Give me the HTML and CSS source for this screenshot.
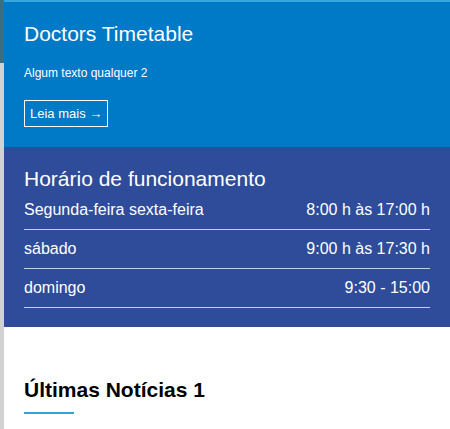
FILE: index.html
```html
<!DOCTYPE html>
<html lang="pt">
<head>
<meta charset="utf-8">
<title>Doctors Timetable</title>
<link rel="stylesheet" href="styles.css">
</head>
<body>
<div class="page">
  <div class="edge"><div class="edge-top"></div></div>
  <main class="main">
    <section class="hero">
      <h1 class="hero-title">Doctors Timetable</h1>
      <p class="hero-text">Algum texto qualquer 2</p>
      <a class="btn" href="#">Leia mais →</a>
    </section>
    <section class="hours">
      <h2 class="hours-title">Horário de funcionamento</h2>
      <div class="row"><span>Segunda-feira sexta-feira</span><span>8:00 h às 17:00 h</span></div>
      <div class="row"><span>sábado</span><span>9:00 h às 17:30 h</span></div>
      <div class="row"><span>domingo</span><span>9:30 - 15:00</span></div>
    </section>
    <section class="news">
      <h2 class="news-title">Últimas Notícias 1</h2>
      <div class="news-bar"></div>
    </section>
  </main>
</div>
</body>
</html>
```
FILE: styles.css
```css
html, body {
  margin: 0;
  padding: 0;
}
body {
  font-family: "Liberation Sans", Arial, sans-serif;
  background: #ffffff;
}
.page {
  display: flex;
  min-height: 429px;
}
.edge {
  width: 4px;
  flex: 0 0 4px;
  background: #d2d2d2;
}
.edge-top {
  height: 63px;
  background: #3b6f7f;
}
.main {
  flex: 1;
  display: flex;
  flex-direction: column;
}
.hero {
  background: #0079c6;
  border-top: 2px solid #36a6e0;
  padding: 20px 20px 20px;
  color: #ffffff;
}
.hero-title {
  margin: 0;
  font-size: 21px;
  line-height: 24px;
  font-weight: normal;
}
.hero-text {
  margin: 20px 0 0;
  font-size: 12px;
  line-height: 14px;
}
.btn {
  display: inline-block;
  margin-top: 20px;
  border: 1px solid #ffffff;
  padding: 5px 5px;
  font-size: 13px;
  line-height: 15px;
  color: #ffffff;
  text-decoration: none;
}
.hours {
  background: #2e4c9a;
  padding: 20px 20px 19px;
  color: #ffffff;
}
.hours-title {
  margin: 0;
  font-size: 21px;
  line-height: 24px;
  font-weight: normal;
}
.row {
  display: flex;
  justify-content: space-between;
  padding: 10px 0;
  font-size: 16px;
  line-height: 18px;
  border-bottom: 1px solid #c8cee3;
}
.news {
  padding: 51px 20px 0;
}
.news-title {
  margin: 0;
  font-size: 21px;
  line-height: 24px;
  font-weight: bold;
  color: #000000;
}
.news-bar {
  margin-top: 10px;
  width: 50px;
  height: 2px;
  background: #2ea3dc;
}
```
